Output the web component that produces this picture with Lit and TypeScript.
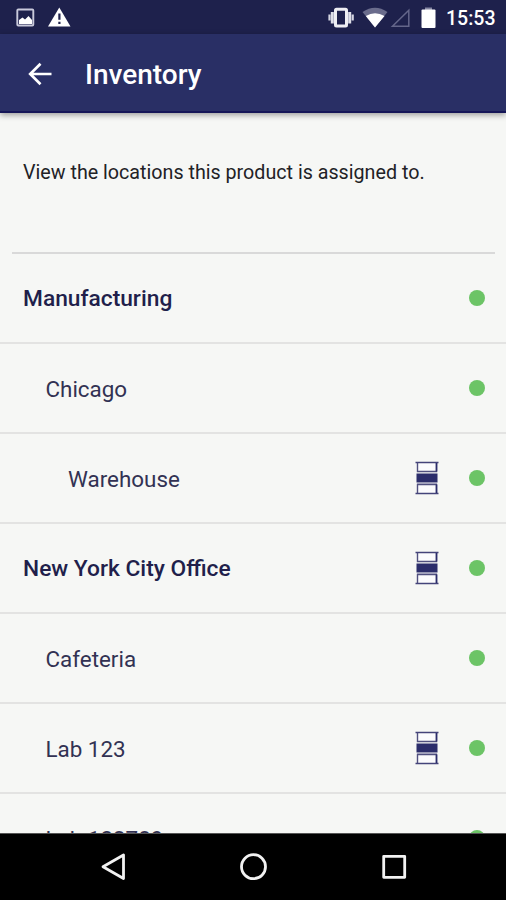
import { LitElement, html, css } from "lit";
import { customElement, property } from "lit/decorators.js";

interface Place {
  name: string;
  level: number;
  stocked?: boolean;
}

const places: Place[] = [
  { name: "Manufacturing", level: 0 },
  { name: "Chicago", level: 1 },
  { name: "Warehouse", level: 2, stocked: true },
  { name: "New York City Office", level: 0, stocked: true },
  { name: "Cafeteria", level: 1 },
  { name: "Lab 123", level: 1, stocked: true },
  { name: "Lab 123789", level: 1 },
];

@customElement("status-bar")
class StatusBar extends LitElement {
  static styles = css`
    :host {
      display: flex;
      align-items: center;
      justify-content: space-between;
      height: 34px;
      flex: none;
      background: #1e214c;
      color: #fff;
    }
    svg { display: block; }
    .time {
      font: 500 19.5px/34px Roboto, sans-serif;
      padding: 2px 10.5px 0 0;
      height: 32px;
    }
    .right { display: flex; }
  `;
  render() {
    return html`
      <svg width="80" height="34" viewBox="0 0 80 34">
        <rect x="17.3" y="9.5" width="16" height="16" rx="1" fill="none" stroke="#c9cadb" stroke-width="1.9" />
        <path d="M19 24v-4l3.5-2.5 2.5 2 3.500-3.500 3.500 4v4z" fill="#fff" />
        <path d="M59.300 7.500L70.500 26.500H48z" fill="#fff" />
        <path d="M59.400 13.500v6.300M59.400 21.700v2.300" stroke="#1e214c" stroke-width="2.200" />
      </svg>
      <div class="right">
        <svg width="118" height="34" viewBox="328.500 0 118 34">
          <rect x="336" y="9.300" width="11" height="16.600" rx="1" fill="none" stroke="#eeeef3" stroke-width="3" />
          <path d="M332.800 12v11.500M350.200 12v11.500" stroke="#dddee8" stroke-width="3" />
          <path d="M330 14.500v6M353.200 14.500v6" stroke="#d5d6e2" stroke-width="2.200" />
          <path d="M363 12Q375.500 3.500 388 12L375.500 27.500z" fill="#6a6c8c" />
          <path d="M366.300 16Q375.500 10.500 385 16L375.500 27.500z" fill="#fff" />
          <path d="M409.300 10.300V26.300H393z" fill="none" stroke="#64668a" stroke-width="1.500" />
          <path d="M425.500 7.500h7v3h-7z" fill="#8587a2" />
          <rect x="422" y="9.500" width="14" height="18.500" rx="1" fill="#fff" />
        </svg>
        <div class="time">15:53</div>
      </div>
    `;
  }
}

@customElement("title-bar")
class TitleBar extends LitElement {
  static styles = css`
    :host {
      display: flex;
      align-items: center;
      flex: none;
      box-sizing: border-box;
      height: 79px;
      background: #292f65;
      border-bottom: 2px solid #151657;
      box-shadow: 0 2px 6px rgba(0, 0, 0, 0.38);
      position: relative;
      color: #fff;
    }
    svg { display: block; margin: 2px 0 0 26px; }
    .title {
      margin: 5px 0 0 32px;
      font: 500 28px/32px Roboto, sans-serif;
    }
  `;
  render() {
    return html`
      <svg width="27" height="26" viewBox="0 0 27 26">
        <path d="M25.500 13H4M14.500 2.700L4.200 13L14.500 23.300" fill="none" stroke="#fff" stroke-width="2.700" />
      </svg>
      <div class="title">Inventory</div>
    `;
  }
}

@customElement("place-row")
class PlaceRow extends LitElement {
  @property({ attribute: false }) place!: Place;
  static styles = css`
    :host { display: block; flex: none; }
    .row {
      box-sizing: border-box;
      height: 90px;
      display: flex;
      align-items: center;
      padding: 0 21.500px 0 23px;
      border-bottom: 2px solid #e3e3e2;
      color: #323253;
      font: 400 22.400px/30px Roboto, sans-serif;
    }
    .level0 { font-weight: 500; font-size: 22.750px; color: #211f4b; }
    .level1 { padding-left: 45.500px; }
    .level2 { padding-left: 68px; }
    .name { flex: 1; white-space: nowrap; padding-top: 2px; }
    .spool { display: block; margin-right: 28.500px; }
    .dot {
      width: 16px;
      height: 16px;
      border-radius: 50%;
      background: #6cc466;
    }
  `;
  render() {
    const { name, level, stocked } = this.place;
    return html`
      <div class="row level${level}">
        <span class="name">${name}</span>
        ${stocked
          ? html`<svg class="spool" width="26" height="34" viewBox="0 0 26 34">
              <path d="M3.500 2v8.500h19V2M3.500 32v-8.500h19V32" fill="#fbfbfd" stroke="#50507f" stroke-width="1.400" />
              <path d="M1.500 1.500h23M1.500 32.500h23" stroke="#44447a" stroke-width="1.500" />
              <path d="M22.500 2v8.500M22.500 23.500V32" stroke="#2b2d6b" stroke-width="1.600" />
              <rect x="2.500" y="12.500" width="21" height="9" fill="#2b2d6b" />
              <path d="M3 22.300h20" stroke="#a3a3bd" stroke-width="1.400" />
            </svg>`
          : ""}
        <span class="dot"></span>
      </div>
    `;
  }
}

@customElement("nav-bar")
class NavBar extends LitElement {
  static styles = css`
    :host {
      display: flex;
      justify-content: center;
      box-sizing: border-box;
      flex: none;
      height: 67px;
      background: #000;
      border-top: 1px solid #555;
    }
    svg { display: block; }
  `;
  render() {
    return html`
      <svg width="506" height="66" viewBox="0 834 506 66">
        <g fill="none" stroke="#f2f2f2" stroke-width="2.800" stroke-linejoin="round">
          <path d="M123.500 855V878.500L103 866.800z" />
          <circle cx="253.500" cy="866.700" r="12" />
          <rect x="383.700" y="856.300" width="21" height="21" />
        </g>
      </svg>
    `;
  }
}

@customElement("app-root")
class AppRoot extends LitElement {
  static styles = css`
    :host {
      display: flex;
      flex-direction: column;
      height: 900px;
      overflow: hidden;
      background: #f6f7f5;
    }
    .content {
      flex: 1;
      min-height: 0;
      overflow: hidden;
      display: flex;
      flex-direction: column;
    }
    .intro {
      flex: none;
      box-sizing: border-box;
      height: 141px;
      margin: 0 11px 0 12px;
      padding: 46px 0 0 11px;
      border-bottom: 2px solid #d9d9d9;
      color: #222226;
      font: 400 19.700px/28px Roboto, sans-serif;
      white-space: nowrap;
    }
  `;
  render() {
    return html`
      <status-bar></status-bar>
      <title-bar></title-bar>
      <div class="content">
        <div class="intro">View the locations this product is assigned to.</div>
        ${places.map((place) => html`<place-row .place=${place}></place-row>`)}
      </div>
      <nav-bar></nav-bar>
    `;
  }
}
